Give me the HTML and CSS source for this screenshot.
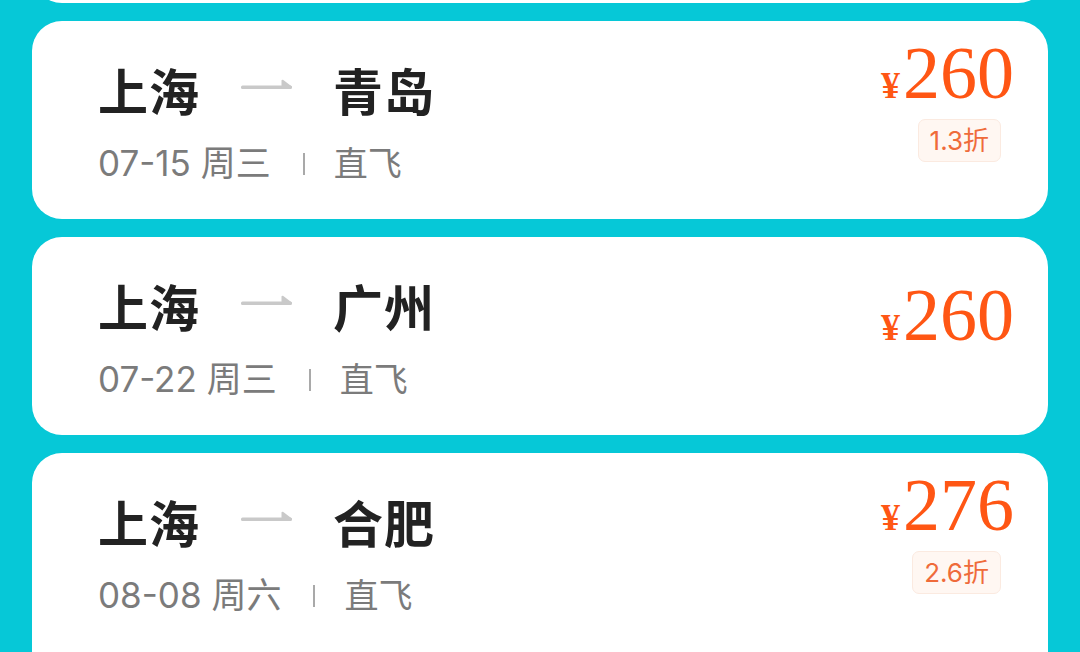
FILE: index.html
```html
<!DOCTYPE html>
<html lang="zh-CN">
<head>
<meta charset="utf-8">
<title>特价机票</title>
<link rel="stylesheet" href="styles.css">
</head>
<body>
<main class="deals">
  <article class="card card--prev"></article>

  <article class="card">
    <div class="route">
      <div class="cities">
        <span class="city">上海</span>
        <svg class="arrow" viewBox="0 0 52 12" width="52" height="12" aria-hidden="true">
          <rect x="0" y="6.5" width="51" height="3.5" rx="1.5" fill="#c9c9c9"/>
          <path d="M40.5 1.2 Q41 0.6 42 0.8 L50.5 7.2 Q51.5 8 50.2 8.2 L40.5 8.2 Z" fill="#c9c9c9"/>
        </svg>
        <span class="city">青岛</span>
      </div>
      <div class="meta">
        <span class="date">07-15 周三</span>
        <span class="sep"></span>
        <span class="kind">直飞</span>
      </div>
    </div>
    <div class="fare">
      <div class="price"><span class="yen">¥</span>260</div>
      <div class="discount">1.3折</div>
    </div>
  </article>

  <article class="card">
    <div class="route">
      <div class="cities">
        <span class="city">上海</span>
        <svg class="arrow" viewBox="0 0 52 12" width="52" height="12" aria-hidden="true">
          <rect x="0" y="6.5" width="51" height="3.5" rx="1.5" fill="#c9c9c9"/>
          <path d="M40.5 1.2 Q41 0.6 42 0.8 L50.5 7.2 Q51.5 8 50.2 8.2 L40.5 8.2 Z" fill="#c9c9c9"/>
        </svg>
        <span class="city">广州</span>
      </div>
      <div class="meta">
        <span class="date">07-22 周三</span>
        <span class="sep"></span>
        <span class="kind">直飞</span>
      </div>
    </div>
    <div class="fare">
      <div class="price"><span class="yen">¥</span>260</div>
    </div>
  </article>

  <article class="card card--last">
    <div class="route">
      <div class="cities">
        <span class="city">上海</span>
        <svg class="arrow" viewBox="0 0 52 12" width="52" height="12" aria-hidden="true">
          <rect x="0" y="6.5" width="51" height="3.5" rx="1.5" fill="#c9c9c9"/>
          <path d="M40.5 1.2 Q41 0.6 42 0.8 L50.5 7.2 Q51.5 8 50.2 8.2 L40.5 8.2 Z" fill="#c9c9c9"/>
        </svg>
        <span class="city">合肥</span>
      </div>
      <div class="meta">
        <span class="date">08-08 周六</span>
        <span class="sep"></span>
        <span class="kind">直飞</span>
      </div>
    </div>
    <div class="fare">
      <div class="price"><span class="yen">¥</span>276</div>
      <div class="discount">2.6折</div>
    </div>
  </article>
</main>
</body>
</html>
```

FILE: styles.css
```css
* {
  box-sizing: border-box;
}

html,
body {
  margin: 0;
  height: 100%;
}

body {
  background: #06c8d7;
  font-family: "Inter", "Noto Sans CJK SC", sans-serif;
  overflow: hidden;
}

/* scrolled list: the previous card sits mostly above the fold */
.deals {
  display: flex;
  flex-direction: column;
  gap: 18px;
  padding: 0 32px;
  margin-top: -195px;
}

.card {
  display: flex;
  justify-content: space-between;
  align-items: stretch;
  height: 198px;
  flex: none;
  padding: 0 34px 0 66px;
  background: #fff;
  border-radius: 30px;
}

.card--last {
  height: 240px;
}

/* left: cities and date */
.route {
  padding-top: 43px;
}

.cities {
  display: flex;
  align-items: center;
  height: 50px;
}

.city {
  font-family: "Noto Sans CJK SC", sans-serif;
  font-size: 50px;
  line-height: 50px;
  font-weight: 600;
  color: #222;
  letter-spacing: 1px;
}

.arrow {
  display: block;
  margin: 0 40px 0 41px;
  position: relative;
  top: -4px;
}

.meta {
  display: flex;
  align-items: center;
  margin-top: 32px;
  height: 35px;
  font-size: 35px;
  line-height: 35px;
  color: #7b7b7b;
}

.date {
  white-space: pre;
}

.sep {
  width: 2px;
  height: 22px;
  margin: 0 29px 0 32px;
  background: #a9a9a9;
}

.kind {
  font-size: 34px;
}

/* right: fare */
.fare {
  display: flex;
  flex-direction: column;
  justify-content: center;
  align-items: flex-end;
  gap: 8px;
  padding-bottom: 31px;
}

.card--last .fare {
  padding-bottom: 73px;
}

.price {
  font-family: "Liberation Serif", serif;
  font-size: 74px;
  line-height: 52px;
  color: #ff5614;
}

.yen {
  font-size: 38px;
  font-weight: bold;
  margin-right: 3px;
}

.discount {
  margin-right: 13px;
  padding: 0 11px;
  height: 43px;
  line-height: 41px;
  font-size: 26px;
  color: #ef6b3a;
  background: #fff7f2;
  border: 1px solid #fbeae0;
  border-radius: 7px;
}
```
